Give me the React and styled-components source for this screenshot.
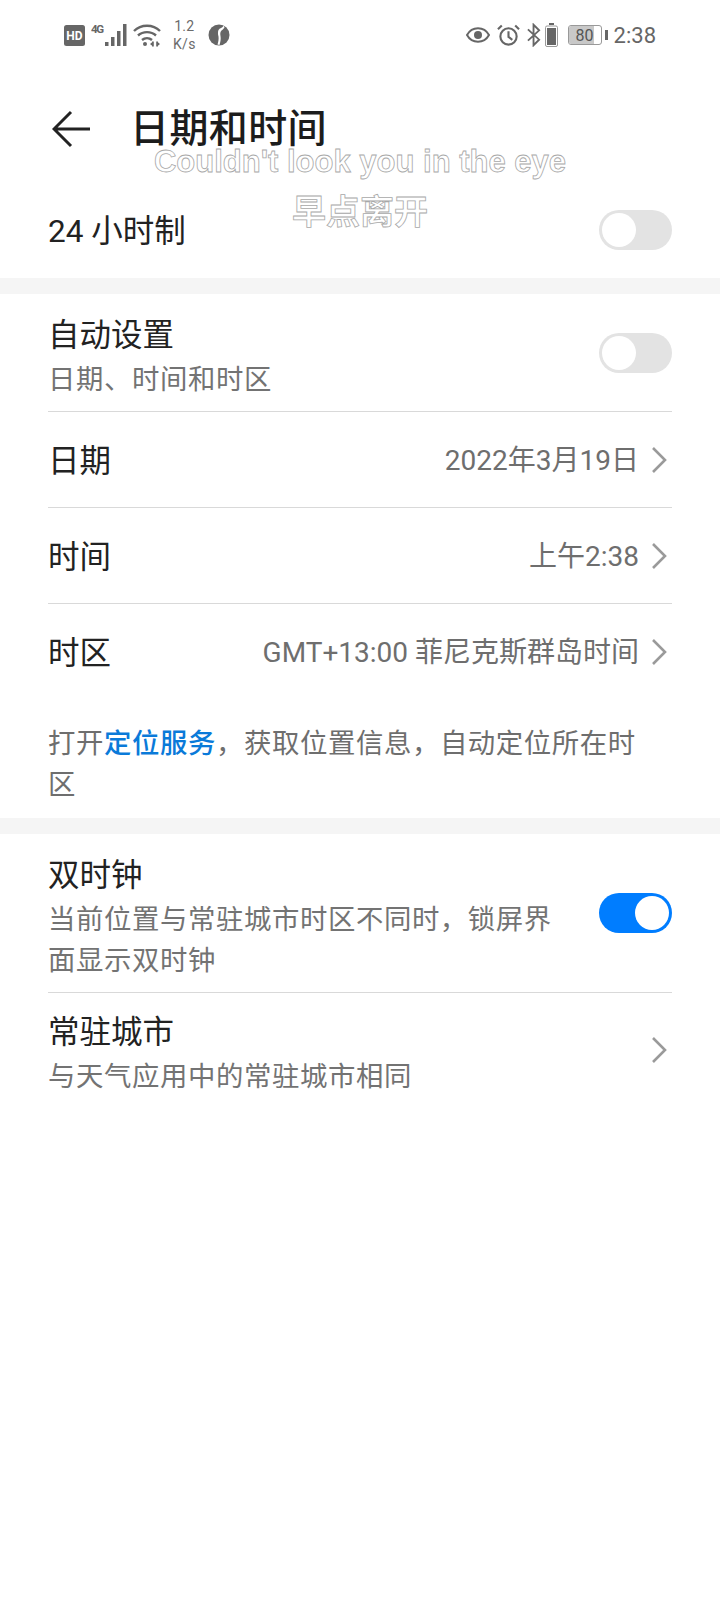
import React from "react";
import styled, { createGlobalStyle } from "styled-components";

const Global = createGlobalStyle`
  html, body { margin: 0; padding: 0; background: #fff; }
  body { font-family: Roboto, "Noto Sans CJK SC", sans-serif; }
`;
const Page = styled.div`
  position: relative; width: 720px; height: 1600px; background: #fff; overflow: hidden;
  font-family: Roboto, "Noto Sans CJK SC", sans-serif; color: #1f1f1f;
`;
const StatusBar = styled.div`
  height: 70px; display: flex; align-items: center; justify-content: space-between;
  padding: 0 64px; color: #666;
`;
const StatusGroup = styled.div`display: flex; align-items: center; gap: ${p => p.$gap || 6}px;`;
const Speed = styled.div`
  font-size: 14px; line-height: 18px; text-align: center; letter-spacing: .3px; color: #6b6b6b; margin: 0 6px;
`;
const Clock = styled.span`font-size: 22px; color: #666; margin-left: -1px;`;
const Header = styled.div`
  height: 72px; display: flex; align-items: center; padding: 0 0 0 52px; margin: 23px 0 17px; gap: 38px;
`;
const Title = styled.h1`
  margin: 0; font-size: 39px; font-weight: 500; line-height: 48px; color: #1c1c1c; letter-spacing: .4px;
`;
const Section = styled.div`padding: 0 48px;`;
const SingleRow = styled.div`
  display: flex; align-items: center; justify-content: space-between; height: ${p => p.$h}px;
  border-top: ${p => (p.$line ? "1px solid #d9d9d9" : "none")};
  box-sizing: border-box;
`;
const Label = styled.span`font-size: 31.5px; line-height: 40px; color: #222;`;
const RowLabel = styled(Label)`padding-top: 4px;`;
const Sub = styled.div`font-size: 27.4px; line-height: 41px; color: #737373; letter-spacing: .6px;`;
const Text = styled.div`
  display: flex; flex-direction: column; padding-top: 11px;
  ${Sub} { margin-top: 4px; }
`;
const Value = styled.div`display: flex; align-items: center; gap: 11px; font-size: 28px; color: #6e6e6e;`;
const ValueText = styled.span`padding-bottom: 3px;`;
const Band = styled.div`height: 16px; background: #f5f5f5;`;
const Note = styled.div`
  padding: 25px 62px 12px 48px; font-size: 27.4px; line-height: 41px; color: #6e6e6e; letter-spacing: .6px;
`;
const Link = styled.span`color: #0a7ad9; font-weight: 500;`;
const Track = styled.div`
  position: relative; width: 73px; height: 40px; border-radius: 20px; flex: none;
  background: ${p => (p.$on ? "#007dff" : "#e3e3e3")};
`;
const Knob = styled.div`
  position: absolute; top: 3px; width: 34px; height: 34px; border-radius: 50%; background: #fff;
  ${p => (p.$on ? "right: 3px;" : "left: 3px;")}
`;
const Lyrics = styled.div`
  position: absolute; left: 0; right: 0; top: 142px; text-align: center; pointer-events: none;
  color: #fff; -webkit-text-stroke: .8px #a8a8a8; font-weight: 700; font-family: "Liberation Sans", "Noto Sans CJK SC", sans-serif;
`;
const LyricLine = styled.div`font-size: ${p => p.$size}px; line-height: 40px; margin-bottom: ${p => p.$mb || 0}px;`;

const ChevronIcon = styled.svg`margin-right: 4px; flex: none;`;
const Chevron = () => (
  <ChevronIcon width="18" height="28" viewBox="0 0 18 28" fill="none" stroke="#9a9a9a" strokeWidth="2.6">
    <path d="M3 2l12 12L3 26" />
  </ChevronIcon>
);
const Back = () => (
  <svg width="40" height="38" viewBox="0 0 40 38" fill="none" stroke="#222" strokeWidth="3">
    <path d="M38 19H3M19 2L2 19l17 17" />
  </svg>
);
const Toggle = ({ on }) => <Track $on={on}><Knob $on={on} /></Track>;

const Hd = () => (
  <svg width="21" height="21" viewBox="0 0 21 21"><rect width="21" height="21" y="0" rx="2.5" fill="#666" /><text x="10.5" y="15" fontSize="12" fontWeight="700" textAnchor="middle" fill="#fff" fontFamily="Roboto">HD</text></svg>
);
const Signal = () => (
  <svg width="36" height="24" viewBox="0 0 36 24" fill="#666">
    <text x="0" y="10" fontSize="11.5" fontWeight="700" fontFamily="Roboto" textLength="13">4G</text>
    <rect x="14" y="19" width="3.500" height="4" /><rect x="20" y="14" width="3.500" height="9" /><rect x="26" y="8" width="3.500" height="15" /><rect x="32" y="1" width="3.500" height="22" />
  </svg>
);
const Wifi = () => (
  <svg width="28" height="24" viewBox="0 0 28 24" fill="none" stroke="#666" strokeWidth="2.4">
    <path d="M1 8c7-7 19-7 26 0M5 12.500c5-4.500 13-4.500 18 0M9 17c3-2.500 7-2.500 10 0" />
    <circle cx="12" cy="21" r="2" fill="#666" stroke="none" />
    <path d="M20 18.500v5M24 18.500v5" strokeWidth="1.600" />
    <path d="M17 21l3-2.500v5zM27 21l-3-2.500v5z" fill="#666" stroke="none" />
  </svg>
);
const Globe = () => (
  <svg width="22" height="22" viewBox="0 0 22 22">
    <circle cx="11" cy="11" r="10.500" fill="#666" />
    <path d="M15 1.500c.5 2.500-3 2-4.500 4.500-.7 1.500-.7 4 0 6.500.3 2 0 5-1 8l2 .5c1-3 1.500-6 1-9-.3-2 -.5-4 1-5.500 1.500-1.200 2.800-2 3-3.500z" fill="#fff" />
  </svg>
);
const Eye = () => (
  <svg width="24" height="18" viewBox="0 0 24 18" fill="none" stroke="#666" strokeWidth="2">
    <path d="M1 9c5-9 17-9 22 0-5 9-17 9-22 0z" /><circle cx="12" cy="9" r="4" fill="#666" stroke="none" />
  </svg>
);
const Alarm = () => (
  <svg width="23" height="24" viewBox="0 0 24 24" fill="none" stroke="#666" strokeWidth="2.200">
    <circle cx="12" cy="13.500" r="8.500" /><path d="M12 8v6l4 3M1 6l4-4M23 6l-4-4" />
  </svg>
);
const Bluetooth = () => (
  <svg width="14" height="24" viewBox="0 0 15 24" fill="none" stroke="#666" strokeWidth="2">
    <path d="M1 6l12 11-6 6V1l6 6L1 18" />
  </svg>
);
const ChargeBattery = styled(({ className }) => (
  <svg className={className} width="13" height="24" viewBox="0 0 13 24"><rect x="4" y="0" width="5" height="2" fill="#666" /><rect x=".5" y="3" width="12" height="20.500" rx="1.500" fill="#fff" stroke="#999" /><rect x="2" y="5" width="9" height="17" fill="#666" /></svg>
))`margin-left: -3px; margin-right: 3px;`;
const BatteryBox = styled.div`
  position: relative; width: 32px; height: 18px; border: 1px solid #999; border-radius: 3px; overflow: hidden;
  display: flex; align-items: center; justify-content: center; font-size: 16px; color: #555; background: #fff;
`;
const BatteryFill = styled.div`position: absolute; left: 0; top: 0; bottom: 0; width: ${p => p.$level}%; background: #c8c8c8;`;
const BatteryLabel = styled.span`position: relative;`;
const BatteryCap = styled.div`width: 3px; height: 10px; background: #666; margin-left: -4px;`;

export default function App() {
  return (
    <Page>
      <Global />
      <StatusBar>
        <StatusGroup $gap={6}>
          <Hd /><Signal /><Wifi /><Speed>1.2<br />K/s</Speed><Globe />
        </StatusGroup>
        <StatusGroup $gap={7}>
          <Eye /><Alarm /><Bluetooth /><ChargeBattery />
          <BatteryBox><BatteryFill $level={80} /><BatteryLabel>80</BatteryLabel></BatteryBox>
          <BatteryCap /><Clock>2:38</Clock>
        </StatusGroup>
      </StatusBar>
      <Header><Back /><Title>日期和时间</Title></Header>
      <Section>
        <SingleRow $h={96}><RowLabel>24 小时制</RowLabel><Toggle /></SingleRow>
      </Section>
      <Band />
      <Section>
        <SingleRow $h={117}>
          <Text><Label>自动设置</Label><Sub>日期、时间和时区</Sub></Text><Toggle />
        </SingleRow>
        <SingleRow $h={96} $line><RowLabel>日期</RowLabel><Value><ValueText>2022年3月19日</ValueText><Chevron /></Value></SingleRow>
        <SingleRow $h={96} $line><RowLabel>时间</RowLabel><Value><ValueText>上午2:38</ValueText><Chevron /></Value></SingleRow>
        <SingleRow $h={96} $line><RowLabel>时区</RowLabel><Value><ValueText>GMT+13:00 菲尼克斯群岛时间</ValueText><Chevron /></Value></SingleRow>
      </Section>
      <Note>打开<Link>定位服务</Link>，获取位置信息，自动定位所在时区</Note>
      <Band />
      <Section>
        <SingleRow $h={158}>
          <Text><Label>双时钟</Label><Sub>当前位置与常驻城市时区不同时，锁屏界<br />面显示双时钟</Sub></Text><Toggle on />
        </SingleRow>
        <SingleRow $h={114} $line>
          <Text><Label>常驻城市</Label><Sub>与天气应用中的常驻城市相同</Sub></Text><Chevron />
        </SingleRow>
      </Section>
      <Lyrics>
        <LyricLine $size={31} $mb={10}>Couldn't look you in the eye</LyricLine>
        <LyricLine $size={34}>早点离开</LyricLine>
      </Lyrics>
    </Page>
  );
}
